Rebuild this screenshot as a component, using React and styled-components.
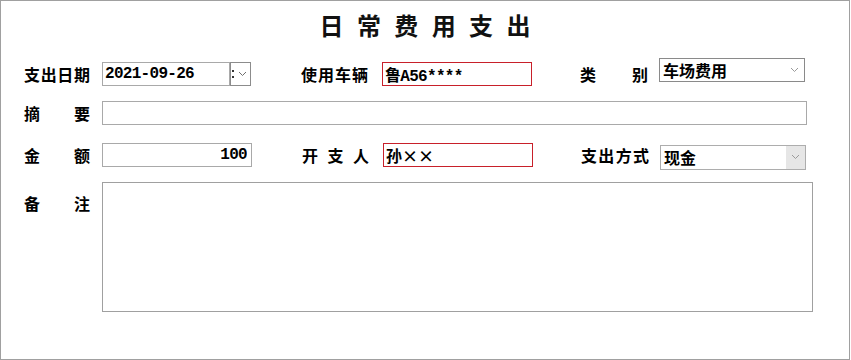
import styled, { createGlobalStyle } from "styled-components";

const GlobalStyle = createGlobalStyle`
  html, body {
    margin: 0;
    padding: 0;
    background: #ffffff;
  }
  * {
    box-sizing: border-box;
  }
`;

const CJK = `"Noto Sans CJK SC", "Noto Sans", sans-serif`;
const FIELD_FONT = `"Liberation Mono", "Noto Sans CJK SC", monospace`;

function Chevron({ color = "#8a8a8a" }) {
  return (
    <svg width="9" height="6" viewBox="0 0 9 6">
      <path d="M1 1 L4.5 4.5 L8 1" fill="none" stroke={color} strokeWidth="1" />
    </svg>
  );
}

// the clipped leftover of the date field's separator in the spin box
function ColonMark() {
  return (
    <svg width="2" height="10" viewBox="0 0 2 10">
      <rect x="0" y="1" width="2" height="2" fill="#333" />
      <rect x="0" y="7" width="2" height="2" fill="#333" />
    </svg>
  );
}

// label text spread over the full label width, like 摘    要
function Label({ text, $width = 66, $top }) {
  return (
    <LabelStyle $width={$width} $top={$top}>
      {[...text].map((c, i) => (
        <span key={i}>{c}</span>
      ))}
    </LabelStyle>
  );
}

function DateField() {
  return (
    <DateWrap>
      <TextBox $width={128} value="2021-09-26" readOnly />
      <Spinner>
        <ColonMark />
        <Chevron color="#6f6f6f" />
      </Spinner>
    </DateWrap>
  );
}

function Select({ value, $flat, $shift }) {
  return (
    <SelectStyle $flat={$flat} $shift={$shift}>
      <SelectText>{value}</SelectText>
      <SelectButton $flat={$flat}>
        <Chevron color="#9a9a9a" />
      </SelectButton>
    </SelectStyle>
  );
}

export default function App() {
  return (
    <>
      <GlobalStyle />
      <Frame>
        <Title>日常费用支出</Title>

        <Row $top={13}>
          <Label text="支出日期" />
          <DateField />
          <Label text="使用车辆" $width={67} />
          <TextBox $width={150} $red value="鲁A56****" readOnly />
          <Label text="类别" $width={68} />
          <Select value="车场费用" $shift={-4} />
        </Row>

        <Row $top={15}>
          <Label text="摘要" />
          <TextBox $width={705} value="" readOnly />
        </Row>

        <Row $top={18}>
          <Label text="金额" />
          <TextBox $width={150} $right value="100" readOnly />
          <Label text="开支人" $width={67} />
          <TextBox $width={150} $red $wide value="孙××" readOnly />
          <Label text="支出方式" $width={68} />
          <Select value="现金" $flat $shift={2} />
        </Row>

        <Row $top={15} $start>
          <Label text="备注" $top={11} />
          <Memo readOnly />
        </Row>
      </Frame>
    </>
  );
}

const Frame = styled.div`
  width: 850px;
  height: 360px;
  border: 1px solid #a0a0a0;
  background: #ffffff;
  padding: 0 0 0 23px;
  display: flex;
  flex-direction: column;
`;

const Title = styled.h1`
  margin: 0 0 0 -23px;
  height: 48px;
  line-height: 48px;
  text-align: center;
  font-family: ${CJK};
  font-size: 24px;
  font-weight: 700;
  letter-spacing: 13.4px;
  padding-left: 13.4px;
  color: #111111;
`;

const Row = styled.div`
  display: flex;
  align-items: ${(p) => (p.$start ? "flex-start" : "center")};
  margin-top: ${(p) => p.$top}px;
  height: ${(p) => (p.$start ? "auto" : "24px")};

  & > :nth-child(2) { margin-left: 12px; }
  & > :nth-child(3) { margin-left: 50px; }
  & > :nth-child(4) { margin-left: 14px; }
  & > :nth-child(5) { margin-left: 48px; }
  & > :nth-child(6) { margin-left: 11px; }
`;

const LabelStyle = styled.div`
  width: ${(p) => p.$width}px;
  flex: none;
  display: flex;
  justify-content: space-between;
  font-family: ${CJK};
  font-size: 16px;
  font-weight: 700;
  line-height: 20px;
  color: #000000;
  margin-top: ${(p) => (p.$top ? `${p.$top}px` : "0")};
`;

const TextBox = styled.input`
  width: ${(p) => p.$width}px;
  height: 24px;
  flex: none;
  border: 1px solid ${(p) => (p.$red ? "#c8202a" : "#a9a9a9")};
  border-radius: 0;
  outline: none;
  background: #ffffff;
  padding: 0 ${(p) => (p.$right ? "4px" : "1px")} 0 2px;
  text-align: ${(p) => (p.$right ? "right" : "left")};
  font-family: ${(p) => (p.$wide ? CJK : FIELD_FONT)};
  font-feature-settings: ${(p) => (p.$wide ? `"fwid"` : "normal")};
  font-size: 16px;
  font-weight: 700;
  letter-spacing: ${(p) => (p.$wide ? "0" : "-0.7px")};
  color: #000000;
`;

const DateWrap = styled.div`
  display: flex;
  flex: none;
  width: 149px;
`;

const Spinner = styled.div`
  width: 21px;
  height: 24px;
  flex: none;
  border: 1px solid #8c8c8c;
  display: flex;
  align-items: center;
  gap: 4px;
  padding-left: 1px;
  background: #ffffff;
`;

const SelectStyle = styled.div`
  width: 146px;
  height: ${(p) => (p.$flat ? "25px" : "24px")};
  flex: none;
  border: 1px solid ${(p) => (p.$flat ? "#adadad" : "#8a8a8a")};
  background: #ffffff;
  display: flex;
  align-items: stretch;
  margin-top: ${(p) => p.$shift * 2}px;
`;

const SelectText = styled.div`
  flex: 1;
  padding-left: 3px;
  display: flex;
  align-items: center;
  font-family: ${CJK};
  font-size: 16px;
  font-weight: 700;
  color: #000000;
`;

const SelectButton = styled.div`
  width: 19px;
  flex: none;
  display: flex;
  align-items: center;
  justify-content: center;
  background: ${(p) => (p.$flat ? "#e6e6e6" : "#ffffff")};
`;

const Memo = styled.textarea`
  width: 711px;
  height: 130px;
  margin-left: 12px;
  flex: none;
  border: 1px solid #a0a0a0;
  border-radius: 0;
  outline: none;
  resize: none;
  background: #ffffff;
`;
